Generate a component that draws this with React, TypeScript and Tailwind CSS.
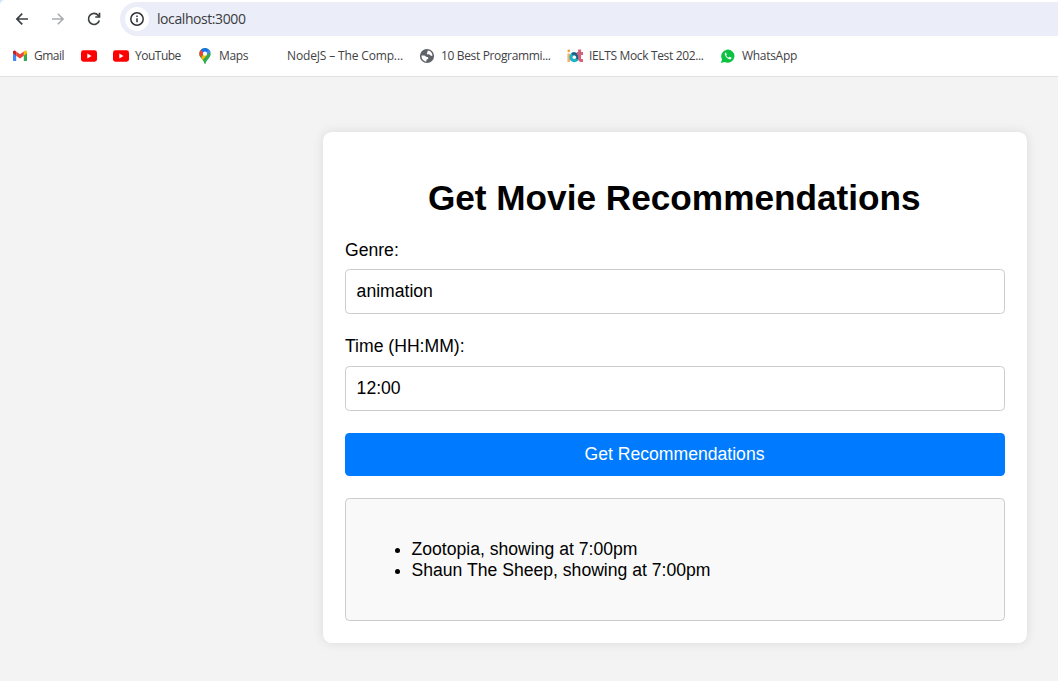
import type { ReactNode } from "react";

function GmailIcon() {
  return (
    <svg width="16" height="16" viewBox="0 0 16 16">
      <path d="M1 4v8.200c0 .5.4.9.9.9h2.300V6.800z" fill="#4285f4" />
      <path d="M15 4v8.200c0 .5-.4.9-.9.9h-2.300V6.800z" fill="#34a853" />
      <path d="M11.800 3.600v4.100L15 5.300V4.100c0-1.500-1.500-2-2.500-1.200z" fill="#fbbc04" />
      <path d="M4.200 7.700V3.400L8 6.300l3.800-2.900v4.300L8 10.600z" fill="#ea4335" />
      <path d="M1 4.100v1.200l3.200 2.400V3.600l-.7-.6C2.500 2.200 1 2.700 1 4.100z" fill="#c5221f" />
    </svg>
  );
}

function YouTubeIcon() {
  return (
    <svg width="16" height="16" viewBox="0 0 16 16">
      <rect x="0" y="2.300" width="16" height="11.400" rx="2.400" fill="#ff0000" />
      <path d="M6.300 5.600v4.800L10.600 8z" fill="#fff" />
    </svg>
  );
}

function MapsIcon() {
  return (
    <svg width="16" height="16" viewBox="0 0 16 16">
      <defs>
        <clipPath id="pin">
          <path d="M8 0a5.700 5.700 0 0 0-5.700 5.700c0 2.300 1 3.500 2.500 5.300C6.200 12.700 7 14 7.300 15.300c.2.900 1.200.9 1.400 0C9 14 9.800 12.700 11.200 11c1.500-1.800 2.500-3 2.500-5.300A5.700 5.700 0 0 0 8 0z" />
        </clipPath>
      </defs>
      <g clipPath="url(#pin)">
        <rect width="16" height="16" fill="#34a853" />
        <path d="M3 12 0 8v3l4 3 6-7-2-3z" fill="#fbbc04" />
        <path d="M0 0v6l3 3.500L8 4 4 0z" fill="#ea4335" />
        <path d="M3.600 2 8 5.700l5.500-3.900L10 0H5z" fill="#1a73e8" />
        <path d="m8 5.700 4.500-5L14 4 9 7z" fill="#4285f4" />
      </g>
      <circle cx="8" cy="5.700" r="2.100" fill="#fff" />
    </svg>
  );
}

function GlobeIcon() {
  return (
    <svg width="16" height="16" viewBox="0 0 16 16">
      <circle cx="8" cy="8" r="7.100" fill="#5f6368" />
      <path
        d="M2.500 7.500h2.700c1.300 0 1.500 1.600 2.700 1.600 1 0 1.600.5 1.400 1.500-.2.900-1.700.7-1.900 1.500v1.500C4.700 13.400 2.400 11 2.500 7.500z"
        fill="#fff"
      />
      <path
        d="M8.400 2.700h1.900c1.800.9 3.100 2.800 3.200 4.800-1 .8-2 .2-2.500-.5-.5-.7-1.900-.2-2.700-.7-.9-.6-.5-1.400.1-1.700.6-.4 0-1 0-1.900z"
        fill="#fff"
      />
    </svg>
  );
}

function IotIcon() {
  return (
    <svg width="16" height="16" viewBox="0 0 16 16" fill="none">
      <circle cx="1.800" cy="2.800" r="1.400" fill="#e9a43c" />
      <path d="M1.700 5.500v8.500" stroke="#f3b070" strokeWidth="2.600" />
      <circle cx="7.300" cy="9.200" r="3.400" stroke="#1fb3c6" strokeWidth="3.200" />
      <path d="M5 6.200a3.900 3.900 0 0 1 5.700 2.500v2.500" stroke="#20607f" strokeWidth="2.600" />
      <path d="M12.600 1.500v9.300c0 1.500 1 2 3.400 1.600M10 5.600H16" stroke="#d4627c" strokeWidth="3" />
    </svg>
  );
}

function WhatsAppIcon() {
  return (
    <svg width="16" height="16" viewBox="0 0 16 16">
      <path d="M1 15l1-3.700A6.600 6.600 0 1 1 4.700 14z" fill="#0dc143" />
      <path
        d="M5.700 4.500c-.9.500-1.100 1.500-.7 2.500.8 2 2.200 3.500 4.300 4.200 1 .3 2-.1 2.200-1.200.1-.4 0-.5-.3-.6l-1.500-.7c-.4-.1-.6.8-1 .9-.8.1-2.400-1.500-2.500-2.200 0-.4.7-.6.6-1l-.6-1.500c-.1-.3-.2-.4-.5-.4z"
        fill="#fff"
      />
    </svg>
  );
}

type Bookmark = { label: string; icon: ReactNode; width: string; text: string };

const bookmarks: Bookmark[] = [
  { label: "Gmail", icon: <GmailIcon />, width: "w-[69px]", text: "tracking-[-0.5px]" },
  { label: "", icon: <YouTubeIcon />, width: "w-8", text: "" },
  { label: "YouTube", icon: <YouTubeIcon />, width: "w-[84px]", text: "tracking-[-0.5px]" },
  { label: "Maps", icon: <MapsIcon />, width: "w-[68px]", text: "tracking-[-0.35px]" },
  { label: "NodeJS – The Comp...", icon: null, width: "w-[154px]", text: "tracking-[-0.15px]" },
  { label: "10 Best Programmi...", icon: <GlobeIcon />, width: "w-[148px]", text: "tracking-[-0.35px]" },
  { label: "IELTS Mock Test 202...", icon: <IotIcon />, width: "w-[153px]", text: "tracking-[-0.35px]" },
  { label: "WhatsApp", icon: <WhatsAppIcon />, width: "w-[100px]", text: "tracking-[-0.3px]" },
];

function BrowserChrome() {
  return (
    <header className="h-[77px] shrink-0 border-b border-[#dfe1e3] bg-[#d3e3fd] font-['Open_Sans',sans-serif]">
      <div className="h-full rounded-tl-[5px] bg-white">
        <div className="flex h-[38px] items-center pl-[14px]">
          <svg width="16" height="16" viewBox="0 0 16 16" fill="none" stroke="#3c4043" strokeWidth="1.700">
            <path d="M14 8H3M8.200 2.700 2.900 8l5.300 5.300" />
          </svg>
          <svg className="ml-5" width="16" height="16" viewBox="0 0 16 16" fill="none" stroke="#aaacae" strokeWidth="1.600">
            <path d="M2 8h11M7.800 2.700 13.100 8l-5.300 5.300" />
          </svg>
          <svg className="ml-5" width="16" height="16" viewBox="0 0 16 16" fill="none" stroke="#3c4043" strokeWidth="1.700">
            <path d="M13.300 9.500A5.500 5.500 0 1 1 12.200 4.400L13.500 6" />
            <path d="M13.500 1.800V6H9.300" />
          </svg>
          <div className="ml-[18px] flex h-[34px] flex-1 items-center rounded-l-full bg-[#ebeef8] pl-[5px]">
            <span className="flex size-6 items-center justify-center rounded-full bg-white">
              <svg width="16" height="16" viewBox="0 0 16 16" fill="none" stroke="#303235" strokeWidth="1.500">
                <circle cx="8" cy="8" r="6.200" />
                <path d="M8 7.200v4M8 4.500V6" />
              </svg>
            </span>
            <span className="ml-2 text-sm tracking-[-0.42px] text-[#3a3b3f]">localhost:3000</span>
          </div>
        </div>
        <nav className="flex h-9 items-center pl-3 text-xs text-[#3f4245]">
          {bookmarks.map((b, i) => (
            <div key={i} className={`flex shrink-0 items-center gap-1.5 whitespace-nowrap ${b.width}`}>
              <span className="size-4 shrink-0">{b.icon}</span>
              {b.label && <span className={b.text}>{b.label}</span>}
            </div>
          ))}
        </nav>
      </div>
    </header>
  );
}

type FieldProps = { label: string; value: string; labelHeight: string };

function Field({ label, value, labelHeight }: FieldProps) {
  return (
    <label className="block">
      <span className={`block leading-5 ${labelHeight}`}>{label}</span>
      <input
        type="text"
        defaultValue={value}
        className="block h-[45px] w-full rounded-[4.4px] border border-[#ccc] bg-white px-[10.6px] outline-none"
      />
    </label>
  );
}

export default function App() {
  return (
    <div className="flex h-[681px] flex-col overflow-hidden bg-[#f3f3f3]">
      <BrowserChrome />
      <main className="pt-[55px] pl-[323px] font-['Liberation_Sans',Arial,sans-serif] text-[17.6px] text-black">
        <section className="h-[511px] w-[704px] rounded-[8.8px] bg-white px-[22px] pt-[46px] shadow-[0_0_11px_rgba(0,0,0,0.1)]">
          <h1 className="pr-[1.5px] text-center text-[35.2px] leading-10 font-bold">Get Movie Recommendations</h1>
          <form className="flex flex-col gap-[22px] pt-[22px]" onSubmit={(e) => e.preventDefault()}>
            <Field label="Genre:" value="animation" labelHeight="h-[29px]" />
            <Field label="Time (HH:MM):" value="12:00" labelHeight="h-[30px]" />
            <button className="h-[43px] rounded-[4.4px] bg-[#007bff] pr-px text-white">
              Get Recommendations
            </button>
          </form>
          <div className="mt-[22px] h-[123px] rounded-[4.4px] border border-[#ccc] bg-[#f9f9f9] pt-10">
            <ul className="list-disc pl-[65.5px] leading-[21px]">
              <li>Zootopia, showing at 7:00pm</li>
              <li>Shaun The Sheep, showing at 7:00pm</li>
            </ul>
          </div>
        </section>
      </main>
    </div>
  );
}
